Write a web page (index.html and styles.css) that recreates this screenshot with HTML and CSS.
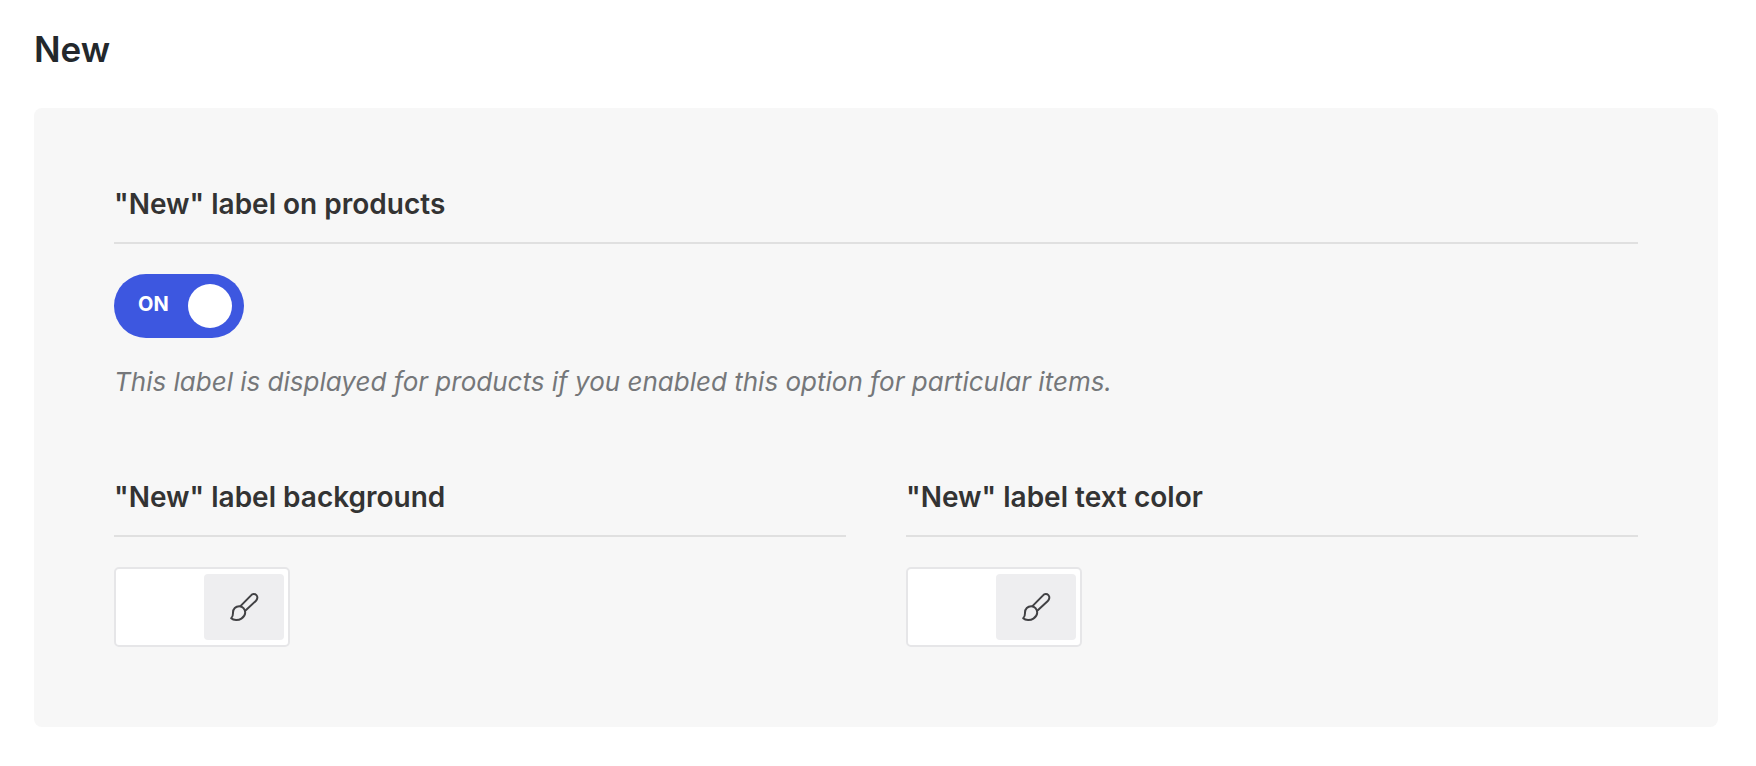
FILE: index.html
```html
<!DOCTYPE html>
<html lang="en">
<head>
<meta charset="utf-8">
<meta name="viewport" content="width=device-width, initial-scale=1">
<title>New</title>
<link rel="stylesheet" href="styles.css">
</head>
<body>
<svg class="sprite" aria-hidden="true">
  <symbol id="brush" viewBox="0 0 32 32">
    <path d="M12.200 15.400 22.800 4.600C24.500 2.700 26.900 2.600 28.400 4.100S29.600 8.200 27.800 9.900L17 20.100"/>
    <path d="M17.200 21.800C17.200 18 14.700 15.200 11.200 15.200 7.700 15.200 5 18 5 21.500 5 24 5.200 25.500 3.200 27.300 5.500 29.500 10.500 29.500 13.400 27.600 15.700 26.100 17.200 24.200 17.200 21.800Z"/>
  </symbol>
</svg>
<main class="page">
  <h1 class="page-title">New</h1>
  <section class="card">
    <div class="field">
      <label class="field-label" for="new-label">"New" label on products</label>
      <div class="switch">
        <input class="switch-input" type="checkbox" role="switch" id="new-label" checked>
        <span class="switch-text" aria-hidden="true">ON</span>
        <span class="switch-knob"></span>
      </div>
      <p class="field-hint">This label is displayed for products if you enabled this option for particular items.</p>
    </div>
    <div class="field-row">
      <div class="field">
        <label class="field-label" for="label-background">"New" label background</label>
        <div class="picker">
          <input class="picker-color" type="color" id="label-background" value="#ffffff">
          <button class="picker-button" type="button" aria-label="Choose label background"><svg class="icon" aria-hidden="true"><use href="#brush"/></svg></button>
        </div>
      </div>
      <div class="field">
        <label class="field-label" for="label-text-color">"New" label text color</label>
        <div class="picker">
          <input class="picker-color" type="color" id="label-text-color" value="#ffffff">
          <button class="picker-button" type="button" aria-label="Choose label text color"><svg class="icon" aria-hidden="true"><use href="#brush"/></svg></button>
        </div>
      </div>
    </div>
  </section>
</main>
</body>
</html>
```

FILE: styles.css
```css
* {
  box-sizing: border-box;
}

body {
  margin: 0;
  background: #fff;
  color: #333;
  font-family: Inter, "Liberation Sans", sans-serif;
}

.sprite {
  display: none;
}

.page {
  padding: 27px 38px 39px 34px;
}

.page-title {
  margin: 0 0 37px;
  color: #23282c;
  font-size: 35px;
  font-weight: 600;
  line-height: 44px;
}

.card {
  display: flex;
  flex-direction: column;
  gap: 79px;
  padding: 80px;
  border-radius: 8px;
  background: #f7f7f7;
}

.field-row {
  display: grid;
  grid-template-columns: 1fr 1fr;
  gap: 60px;
}

.field-label {
  display: block;
  margin-bottom: 30px;
  padding-bottom: 22px;
  border-bottom: 2px solid #e0e0e0;
  font-size: 28px;
  font-weight: 600;
  line-height: 32px;
}

.switch {
  position: relative;
  display: flex;
  align-items: center;
  justify-content: space-between;
  width: 130px;
  height: 64px;
  padding: 0 12px 0 24px;
  border-radius: 32px;
  background: #3d57e0;
}

.switch-input {
  position: absolute;
  inset: 0;
  width: 100%;
  height: 100%;
  margin: 0;
  opacity: 0;
  cursor: pointer;
}

.switch-text {
  padding-bottom: 4px;
  color: #fff;
  font-size: 20px;
  font-weight: 700;
  line-height: 24px;
}

.switch-knob {
  width: 44px;
  height: 44px;
  border-radius: 50%;
  background: #fff;
}

.field-hint {
  margin: 24px 0 0;
  color: #75777a;
  font-size: 26px;
  font-style: italic;
  line-height: 40px;
}

.picker {
  display: flex;
  width: 176px;
  height: 80px;
  padding: 5px 4px;
  border: 2px solid #e6e6e8;
  border-radius: 5px;
  background: #fff;
}

.picker-color {
  flex: 1;
  min-width: 0;
  height: 100%;
  padding: 0;
  border: 0;
  background: none;
  appearance: none;
}

.picker-color::-webkit-color-swatch-wrapper {
  padding: 0;
}

.picker-color::-webkit-color-swatch {
  border: 0;
}

.picker-button {
  display: flex;
  align-items: center;
  justify-content: center;
  width: 80px;
  padding: 0;
  border: 0;
  border-radius: 4px;
  background: #eeeef0;
  color: #414144;
  cursor: pointer;
}

.icon {
  width: 32px;
  height: 32px;
  fill: none;
  stroke: currentColor;
  stroke-width: 2;
  stroke-linejoin: round;
}
```
